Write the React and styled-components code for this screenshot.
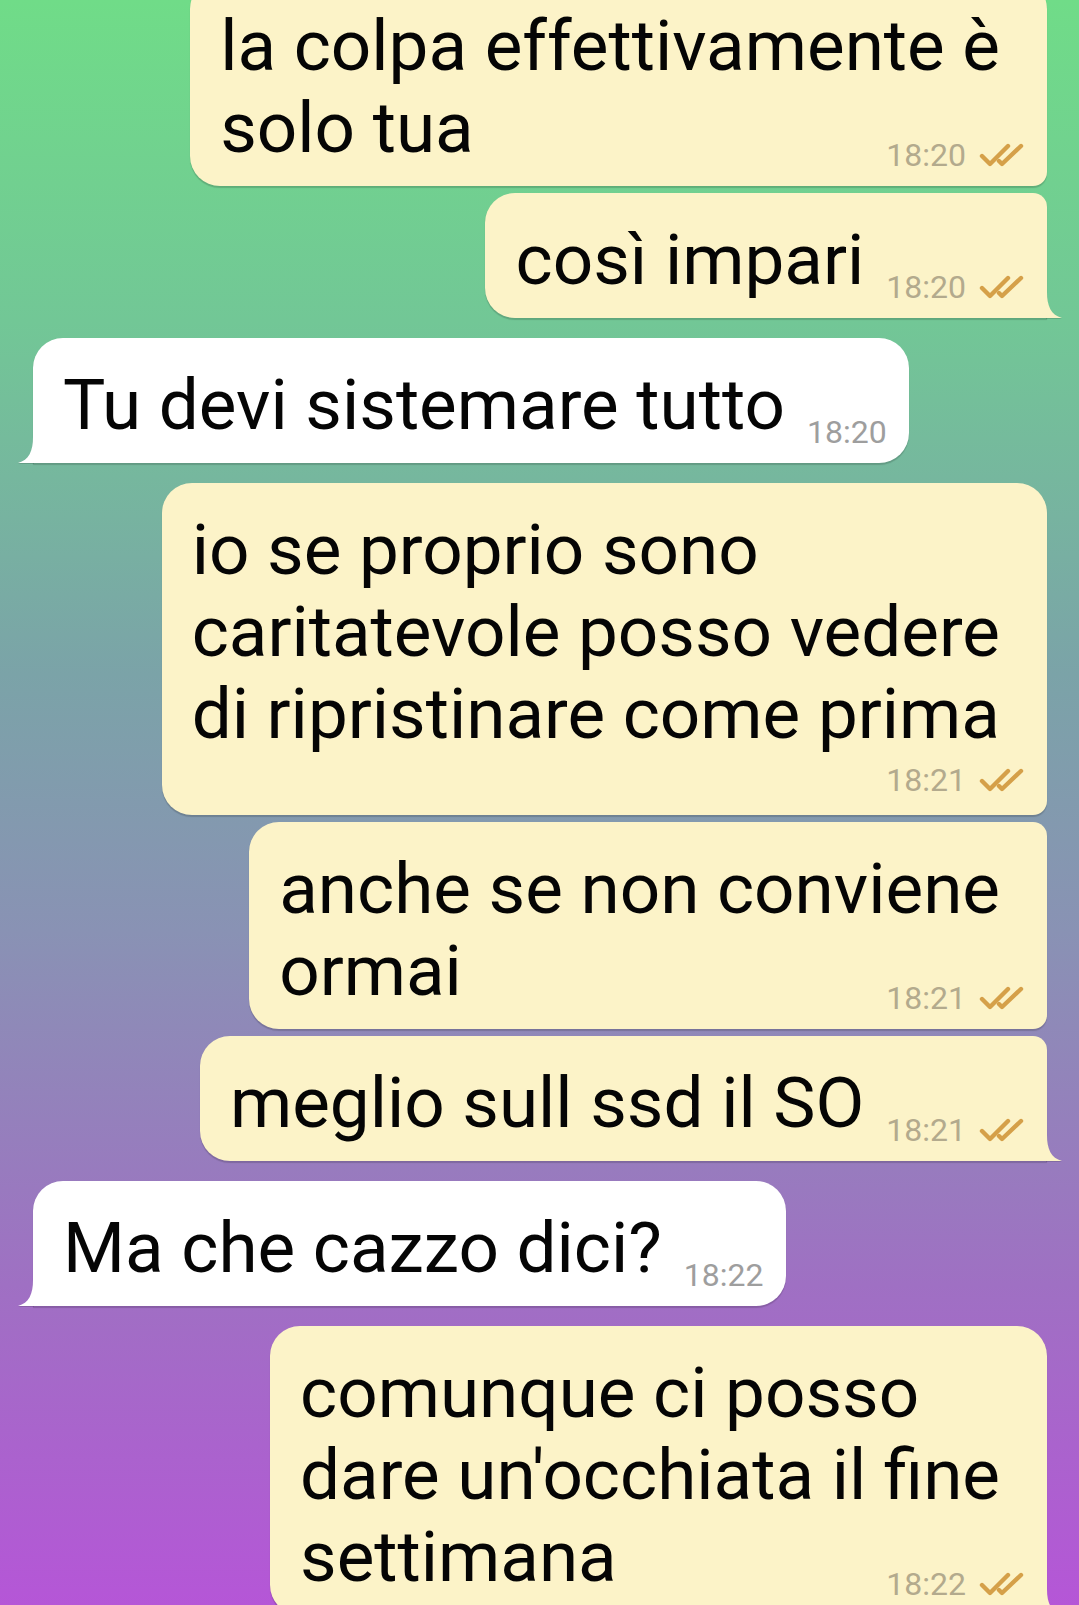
import React from "react";
import styled, { createGlobalStyle } from "styled-components";

const messages = [
  { id: 1, out: true, lines: ["la colpa effettivamente è", "solo tua"], time: "18:20" },
  { id: 2, out: true, lines: ["così impari"], time: "18:20" },
  { id: 3, out: false, lines: ["Tu devi sistemare tutto"], time: "18:20" },
  {
    id: 4,
    out: true,
    lines: ["io se proprio sono", "caritatevole posso vedere", "di ripristinare come prima"],
    time: "18:21",
    metaBelow: true,
  },
  { id: 5, out: true, lines: ["anche se non conviene", "ormai"], time: "18:21" },
  { id: 6, out: true, lines: ["meglio sull ssd il SO"], time: "18:21" },
  { id: 7, out: false, lines: ["Ma che cazzo dici?"], time: "18:22" },
  {
    id: 8,
    out: true,
    lines: ["comunque ci posso", "dare un'occhiata il fine", "settimana"],
    time: "18:22",
  },
];

const GlobalStyle = createGlobalStyle`
  body {
    margin: 0;
    font-family: Roboto, "Noto Sans", sans-serif;
  }
`;

const Page = styled.div`
  height: 1605px;
  overflow: hidden;
  background: linear-gradient(
    180deg,
    #70dc88 0%,
    #72c796 20%,
    #7ba3a8 42%,
    #8992b4 58%,
    #9f70c3 80%,
    #b556d7 100%
  );
`;

const ChatList = styled.div`
  display: flex;
  flex-direction: column;
  margin-top: -21px;
  padding: 0 32px 0 33px;
`;

const Row = styled.div`
  display: flex;
  justify-content: ${(p) => (p.$out ? "flex-end" : "flex-start")};
  margin-top: ${(p) => p.$gap}px;
`;

const Bubble = styled.div`
  position: relative;
  padding: 26px ${(p) => (p.$multi ? 47 : 22)}px 17px 30px;
  background: ${(p) => (p.$out ? "#fcf3c8" : "#ffffff")};
  color: #050505;
  font-size: 71px;
  line-height: 82px;
  white-space: nowrap;
  box-shadow: 0 1.5px 1px rgba(0, 0, 0, 0.16);
  border-radius: ${(p) => p.$radius};
`;

const Meta = styled.div`
  float: right;
  display: flex;
  align-items: center;
  gap: 13px;
  height: 36px;
  margin: 50px ${(p) => (p.$multi ? -25 : 0)}px -20px 22px;
  font-size: 32px;
  line-height: 36px;
  color: ${(p) => (p.$out ? "#b3aa8d" : "#9e9e9e")};
`;

const MetaRow = styled.div`
  display: flex;
  justify-content: flex-end;
  align-items: center;
  gap: 13px;
  height: 36px;
  margin: 7px -25px 0 0;
  font-size: 32px;
  line-height: 36px;
  color: ${(p) => (p.$out ? "#b3aa8d" : "#9e9e9e")};
`;

const Tail = styled.svg`
  position: absolute;
  bottom: 0;
  width: 16px;
  height: 26px;
  ${(p) => (p.$out ? "right: -15px;" : "left: -15px; transform: scaleX(-1);")}
  filter: drop-shadow(0 1.5px 0.5px rgba(0, 0, 0, 0.14));
`;

const Checks = () => (
  <svg width="46" height="25" viewBox="0 0 46 25" fill="none">
    <polyline
      points="3,13 11,21 29,3"
      stroke="#d5a049"
      strokeWidth="4.4"
      strokeLinecap="round"
      strokeLinejoin="round"
    />
    <polyline
      points="20,18 23,21 42,3"
      stroke="#d5a049"
      strokeWidth="4.4"
      strokeLinecap="round"
      strokeLinejoin="round"
    />
  </svg>
);

const radiusFor = (out, firstInGroup, lastInGroup) => {
  const big = 30;
  const small = 14;
  const top = firstInGroup ? big : small;
  const bottom = lastInGroup ? 0 : small;
  // tl tr br bl
  return out
    ? `${big}px ${top}px ${bottom}px ${big}px`
    : `${top}px ${big}px ${big}px ${bottom}px`;
};

const Message = ({ msg, firstInGroup, lastInGroup }) => {
  const multi = msg.lines.length > 1;
  const meta = (
    <>
      <span>{msg.time}</span>
      {msg.out && <Checks />}
    </>
  );

  return (
    <Bubble $out={msg.out} $multi={multi} $radius={radiusFor(msg.out, firstInGroup, lastInGroup)}>
      {msg.lines.map((line, i) => (
        <React.Fragment key={i}>
          {i > 0 && <br />}
          {line}
        </React.Fragment>
      ))}
      {!msg.metaBelow && (
        <Meta $out={msg.out} $multi={multi}>
          {meta}
        </Meta>
      )}
      {msg.metaBelow && <MetaRow $out={msg.out}>{meta}</MetaRow>}
      {lastInGroup && (
        <Tail $out={msg.out} viewBox="0 0 16 26">
          <path d="M0 0 L1 0 C1 14 5 23 16 26 L0 26 Z" fill={msg.out ? "#fcf3c8" : "#ffffff"} />
        </Tail>
      )}
    </Bubble>
  );
};

const App = () => (
  <Page>
    <GlobalStyle />
    <ChatList>
      {messages.map((msg, i) => {
        const prev = messages[i - 1];
        const next = messages[i + 1];
        const firstInGroup = !prev || prev.out !== msg.out;
        const lastInGroup = !next || next.out !== msg.out;
        const gap = !prev ? 0 : firstInGroup ? 20 : 7;
        return (
          <Row key={msg.id} $out={msg.out} $gap={gap}>
            <Message msg={msg} firstInGroup={firstInGroup} lastInGroup={lastInGroup} />
          </Row>
        );
      })}
    </ChatList>
  </Page>
);

export default App;
